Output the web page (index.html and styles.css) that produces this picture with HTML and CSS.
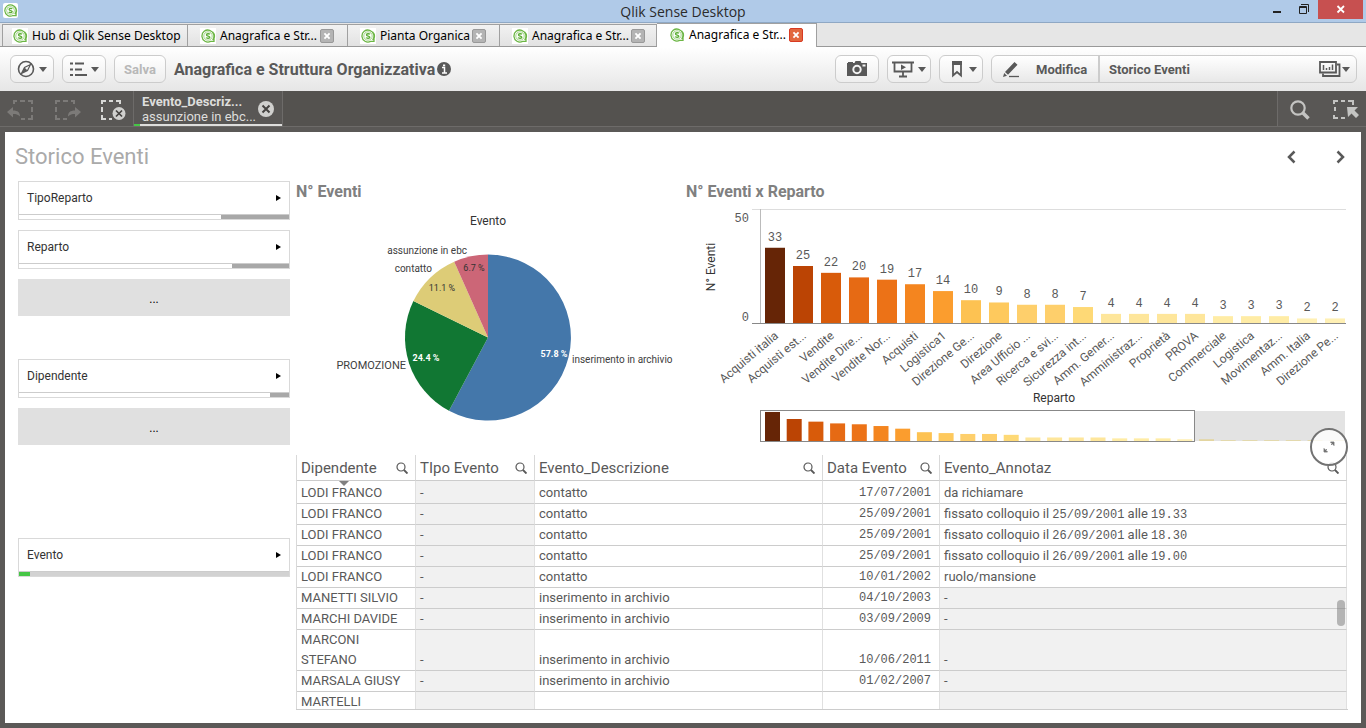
FILE: index.html
```html
<!DOCTYPE html>
<html lang="it">
<head>
<meta charset="utf-8">
<title>Qlik Sense Desktop</title>
<link rel="stylesheet" href="styles.css">
</head>
<body>
<svg class="defs" aria-hidden="true">
  <symbol id="logo" viewBox="0 0 16 16">
    <path d="M12.6 11.8A6 6 0 1 0 10.6 13.4H14V10.4A6 6 0 0 0 12.6 4" fill="none" stroke="#6cb644" stroke-width="1.3"/>
    <circle cx="8" cy="8" r="4.2" fill="none" stroke="#8cc86c" stroke-width=".8"/>
    <path d="M9.8 6.4C9.2 5.5 6.5 5.5 6.5 6.9S9.8 7.9 9.8 9.2 6.8 10.6 6.2 9.5" fill="none" stroke="#5cae34" stroke-width="1.4"/>
  </symbol>
  <symbol id="cross" viewBox="0 0 14 14"><path d="M4 4l6 6M10 4l-6 6" stroke="#fff" stroke-width="2.2"/></symbol>
  <symbol id="caret" viewBox="0 0 8 5"><path d="M0 0h8L4 5z" fill="currentColor"/></symbol>
  <symbol id="lens" viewBox="0 0 12 12"><circle cx="5" cy="5" r="4" fill="none" stroke="#595959" stroke-width="1.2"/><path d="M8 8l3.5 3.5" stroke="#595959" stroke-width="1.9"/></symbol>
</svg>

<header class="titlebar">
  <svg class="app-logo"><use href="#logo"/></svg>
  <h1>Qlik Sense Desktop</h1>
  <div class="window-controls">
    <button aria-label="Riduci a icona"><svg width="10" height="18"><path d="M1 11h8v2H1z" fill="#222"/></svg></button>
    <button aria-label="Ripristina"><svg width="12" height="18"><path d="M1.5 6.5h7v7h-7zM1.5 7.5h7M3 4.500h7.500V12" fill="none" stroke="#222"/></svg></button>
    <button class="window-close" aria-label="Chiudi"><svg width="10" height="18"><path d="M1.5 6l6.500 6.500M8 6l-6.500 6.500" stroke="#fff" stroke-width="1.800"/></svg></button>
  </div>
</header>

<nav class="tabs">
  <div class="tab tab-hub"><svg class="tab-logo"><use href="#logo"/></svg><button class="tab-label">Hub di Qlik Sense Desktop</button></div>
  <div class="tab tab-a"><svg class="tab-logo"><use href="#logo"/></svg><button class="tab-label">Anagrafica e Str...</button><button class="tab-close" aria-label="Chiudi scheda"><svg><use href="#cross"/></svg></button></div>
  <div class="tab tab-b"><svg class="tab-logo"><use href="#logo"/></svg><button class="tab-label">Pianta Organica</button><button class="tab-close" aria-label="Chiudi scheda"><svg><use href="#cross"/></svg></button></div>
  <div class="tab tab-c"><svg class="tab-logo"><use href="#logo"/></svg><button class="tab-label">Anagrafica e Str...</button><button class="tab-close" aria-label="Chiudi scheda"><svg><use href="#cross"/></svg></button></div>
  <div class="tab active"><svg class="tab-logo"><use href="#logo"/></svg><button class="tab-label">Anagrafica e Str...</button><button class="tab-close" aria-label="Chiudi scheda"><svg><use href="#cross"/></svg></button></div>
</nav>

<div class="toolbar">
  <button class="tool" aria-label="Navigazione">
    <svg width="18" height="18"><circle cx="9" cy="9" r="7.5" fill="none" stroke="#595959" stroke-width="1.600"/><path d="M13.500 4.500L10.500 10.500 4.500 13.500 7.500 7.500z" fill="none" stroke="#595959" stroke-width="1.200"/><path d="M7.500 7.500l3 3-6 3z" fill="#595959"/></svg>
    <svg class="caret"><use href="#caret"/></svg>
  </button>
  <button class="tool" aria-label="Menu">
    <svg width="18" height="18"><path d="M1 3.500h3M1 9.500h3M1 15h3M6 3.500h9M6 9.500h7M6 15h12" stroke="#595959" stroke-width="2"/></svg>
    <svg class="caret"><use href="#caret"/></svg>
  </button>
  <button class="tool save" disabled>Salva</button>
  <h2>Anagrafica e Struttura Organizzativa</h2>
  <button class="info" aria-label="Informazioni"><svg width="14" height="14"><circle cx="7" cy="7" r="7" fill="#595959"/><path d="M5 5.500h2.500V11M5 11h5" fill="none" stroke="#fff" stroke-width="1.500"/><path d="M6 2.500h2.200v1.800H6z" fill="#fff"/></svg></button>
  <div class="tools-right">
    <button class="tool" aria-label="Istantanea"><svg width="22" height="18"><path d="M1 3h1V2h5v1h1.500l1-2h5l1 2H21v13H1z" fill="#595959"/><circle cx="11" cy="9.500" r="3.700" fill="none" stroke="#f4f4f4" stroke-width="2"/><path d="M16.500 4.500h3v2h-3z" fill="#f4f4f4"/></svg></button>
    <button class="tool" aria-label="Presentazione">
      <svg width="22" height="18"><path d="M0 2.500h22M2.500 2v9.500h17V2M11 12v4M7 16.500h8" fill="none" stroke="#595959" stroke-width="1.800"/><path d="M9 4.500l5 2.700-5 2.700z" fill="#595959"/></svg>
      <svg class="caret"><use href="#caret"/></svg>
    </button>
    <button class="tool bookmark" aria-label="Segnalibri">
      <svg width="12" height="18"><path d="M2 2v13.500l4-3.500 4 3.500V2z" fill="none" stroke="#595959" stroke-width="1.800"/><path d="M1 1h10v4H1z" fill="#595959"/></svg>
      <svg class="caret"><use href="#caret"/></svg>
    </button>
    <div class="tool-group">
      <button class="edit"><svg width="18" height="18"><path d="M1 17l1.200-4L5 15.700zM3 12L12.500 2l3 2.800L6 14.800z" fill="#595959"/><path d="M7 16.500h10" stroke="#595959" stroke-width="1.300"/></svg>Modifica</button>
      <button class="sheet-picker"><span>Storico Eventi</span>
        <svg width="22" height="18"><path d="M1 2h16v10.500H1z" fill="none" stroke="#595959" stroke-width="1.800"/><path d="M4.500 10V5M7.500 10V8M10.500 10V7M13.500 10V4.500" stroke="#595959" stroke-width="1.500"/><path d="M18 4.500h2.500V16H4v-2.500" fill="none" stroke="#595959" stroke-width="1.800"/></svg>
        <svg class="caret"><use href="#caret"/></svg>
      </button>
    </div>
  </div>
</div>

<div class="selections">
  <div class="selection-tools">
    <button aria-label="Passo indietro"><svg width="28" height="24"><path d="M7 6V3h3M13 3h5M21 3h4v3M25 9v5M25 17v4h-4M18 21h-4" fill="none" stroke="#7c7a78" stroke-width="2"/><path d="M0 14l6-5v3.500c5 0 7 2 7 6-2-2-4-2.500-7-2.500v3.500z" fill="#7c7a78"/></svg></button>
    <button aria-label="Passo avanti"><svg width="28" height="24"><path d="M3 6V3h4M10 3h5M18 3h3v3M3 9v5M3 17v4h4M10 21h4" fill="none" stroke="#7c7a78" stroke-width="2"/><path d="M28 14l-6-5v3.500c-5 0-7 2-7 6 2-2 4-2.500 7-2.500v3.500z" fill="#7c7a78"/></svg></button>
    <button aria-label="Cancella selezioni"><svg width="28" height="24"><path d="M3 6V3h4M10 3h4M17 3h4v3M3 9v5M3 17v4h4M10 21h3" fill="none" stroke="#d8d8d6" stroke-width="2"/><circle cx="20" cy="15.500" r="6.500" fill="#d0d0ce"/><path d="M17 12.500l6 6M23 12.500l-6 6" stroke="#454341" stroke-width="1.700"/></svg></button>
  </div>
  <div class="chip">
    <button class="chip-text"><b>Evento_Descriz...</b><span>assunzione in ebc...</span></button>
    <button class="chip-clear" aria-label="Rimuovi selezione"><svg width="18" height="18"><circle cx="9" cy="9" r="8" fill="#d0d0ce"/><path d="M5.500 5.500l7 7M12.500 5.500l-7 7" stroke="#454341" stroke-width="2"/></svg></button>
    <div class="chip-bar"></div>
  </div>
  <div class="selection-search">
    <button aria-label="Cerca"><svg width="22" height="22"><circle cx="9" cy="9" r="6.700" fill="none" stroke="#c4c4c2" stroke-width="2.200"/><path d="M13.500 13.500l6 6" stroke="#c4c4c2" stroke-width="3.600"/></svg></button>
    <button aria-label="Strumento selezioni"><svg width="26" height="22"><path d="M1 5V2h4M8 2h4M15 2h5v4M2 8v4M1 16v3h4M8 19h4" fill="none" stroke="#c4c4c2" stroke-width="2"/><path d="M14 8h11l-3.500 3.500L26 16l-3 3-4.500-4.500L15 18z" fill="#c4c4c2"/></svg></button>
  </div>
</div>

<main class="sheet">
  <div class="sheet-head">
    <h2>Storico Eventi</h2>
    <button aria-label="Foglio precedente"><svg width="12" height="14"><path d="M9.500 1.500L4 7l5.500 5.500" fill="none" stroke="#595959" stroke-width="2.500"/></svg></button>
    <button aria-label="Foglio successivo"><svg width="12" height="14"><path d="M2.500 1.500L8 7l-5.500 5.500" fill="none" stroke="#595959" stroke-width="2.500"/></svg></button>
  </div>
  <div class="content">
    <aside class="filters">
      <button class="filter">TipoReparto<i></i><span class="state s-tipo"></span></button>
      <button class="filter">Reparto<i></i><span class="state s-reparto"></span></button>
      <button class="more">...</button>
      <button class="filter far">Dipendente<i></i><span class="state s-dipendente"></span></button>
      <button class="more">...</button>
      <button class="filter farther">Evento<i></i><span class="state s-evento"></span></button>
    </aside>
    <div class="objects">
      <div class="charts">
        <section>
          <h3>N° Eventi</h3>
          <svg class="chart" viewBox="0 0 384 245" role="img" aria-label="N° Eventi">
            <path d="M192 132.500V49.500A83 83 0 1 1 153 205.800z" fill="#4477aa"/>
            <path d="M192 132.500L153 205.800A83 83 0 0 1 117.400 96.100z" fill="#117733"/>
            <path d="M192 132.500L117.400 96.100A83 83 0 0 1 158.200 56.700z" fill="#ddcc77"/>
            <path d="M192 132.500L158.200 56.700A83 83 0 0 1 192 49.500z" fill="#cc6677"/>
            <text class="axis-title" x="192" y="20" text-anchor="middle">Evento</text>
            <g class="slice-name">
              <text x="171" y="49" text-anchor="end">assunzione in ebc</text>
              <text x="136" y="67" text-anchor="end">contatto</text>
              <text class="caps" x="110" y="164" text-anchor="end">PROMOZIONE</text>
              <text x="276" y="158">inserimento in archivio</text>
            </g>
            <g class="slice-value" text-anchor="middle">
              <text x="178" y="66">6.7 %</text>
              <text x="146" y="86">11.1 %</text>
              <text class="light" x="130" y="156">24.4 %</text>
              <text class="light" x="258" y="152">57.8 %</text>
            </g>
          </svg>
        </section>
        <section class="bars">
          <h3>N° Eventi x Reparto</h3>
          <svg class="chart" id="bar-chart" viewBox="0 0 662 245" role="img" aria-label="N° Eventi x Reparto"></svg>
          <button class="expand" aria-label="Schermo intero"><svg width="12" height="12"><path d="M7.500 1H11v3.500zM1 7.500V11h3.500zM10 2L8 4M2 10l2-2" fill="#737373" stroke="#737373" stroke-width=".8"/></svg></button>
        </section>
      </div>
      <div class="table-wrap">
        <table>
          <colgroup><col class="c-dip"><col class="c-tipo"><col class="c-desc"><col class="c-data"><col></colgroup>
          <thead><tr>
            <th class="sorted"><div>Dipendente<button aria-label="Cerca in Dipendente"><svg><use href="#lens"/></svg></button></div></th>
            <th><div>TIpo Evento<button aria-label="Cerca in TIpo Evento"><svg><use href="#lens"/></svg></button></div></th>
            <th><div>Evento_Descrizione<button aria-label="Cerca in Evento_Descrizione"><svg><use href="#lens"/></svg></button></div></th>
            <th><div>Data Evento<button aria-label="Cerca in Data Evento"><svg><use href="#lens"/></svg></button></div></th>
            <th><div>Evento_Annotaz<button aria-label="Cerca in Evento_Annotaz"><svg><use href="#lens"/></svg></button></div></th>
          </tr></thead>
          <tbody>
            <tr><td>LODI FRANCO</td><td class="null">-</td><td>contatto</td><td class="date">17/07/2001</td><td>da richiamare</td></tr>
            <tr><td>LODI FRANCO</td><td class="null">-</td><td>contatto</td><td class="date">25/09/2001</td><td>fissato colloquio il <span class="num">25/09/2001</span> alle <span class="num">19.33</span></td></tr>
            <tr><td>LODI FRANCO</td><td class="null">-</td><td>contatto</td><td class="date">25/09/2001</td><td>fissato colloquio il <span class="num">26/09/2001</span> alle <span class="num">18.30</span></td></tr>
            <tr><td>LODI FRANCO</td><td class="null">-</td><td>contatto</td><td class="date">25/09/2001</td><td>fissato colloquio il <span class="num">26/09/2001</span> alle <span class="num">19.00</span></td></tr>
            <tr><td>LODI FRANCO</td><td class="null">-</td><td>contatto</td><td class="date">10/01/2002</td><td>ruolo/mansione</td></tr>
            <tr><td>MANETTI SILVIO</td><td class="null">-</td><td>inserimento in archivio</td><td class="date">04/10/2003</td><td class="null">-</td></tr>
            <tr><td>MARCHI DAVIDE</td><td class="null">-</td><td>inserimento in archivio</td><td class="date">03/09/2009</td><td class="null">-</td></tr>
            <tr><td>MARCONI<br>STEFANO</td><td class="null">-</td><td>inserimento in archivio</td><td class="date">10/06/2011</td><td class="null">-</td></tr>
            <tr><td>MARSALA GIUSY</td><td class="null">-</td><td>inserimento in archivio</td><td class="date">01/02/2007</td><td class="null">-</td></tr>
            <tr><td>MARTELLI</td><td class="null"></td><td></td><td class="date"></td><td class="null"></td></tr>
          </tbody>
        </table>
        <div class="scroll-thumb"></div>
      </div>
    </div>
  </div>
</main>
<script src="chart.js"></script>
</body>
</html>
```

FILE: styles.css
```css
* { box-sizing: border-box; }
body {
  margin: 0;
  height: 100vh;
  display: flex;
  flex-direction: column;
  background: #5b5957;
  color: #595959;
  font-family: Roboto, "Liberation Sans", sans-serif;
  font-size: 13px;
}
button {
  margin: 0;
  padding: 0;
  border: 0;
  background: none;
  font: inherit;
  color: inherit;
  text-align: left;
}
h1, h2, h3 { margin: 0; }
svg { display: block; flex: none; }
.defs { position: absolute; width: 0; height: 0; }

/* Window frame */
.titlebar {
  flex: none;
  display: grid;
  grid-template-columns: 1fr auto 1fr;
  height: 23px;
  padding: 0 3px;
  background: #b0cae8;
  border-bottom: 1px solid #8fa8c4;
}
.titlebar h1 {
  font: 14px/23px "Open Sans", sans-serif;
  color: #2b2b2b;
}
.app-logo { width: 15px; height: 15px; margin-top: 3px; background: #fff; border-radius: 2px; }
.window-controls { display: flex; justify-content: flex-end; align-items: flex-start; }
.window-controls button { margin-right: 16px; }
.window-controls button + button { margin-right: 8px; }
.window-controls .window-close { display: flex; justify-content: center; width: 45px; height: 19px; margin-right: 0; background: #c75050; }

.tabs {
  flex: none;
  display: flex;
  align-items: flex-end;
  height: 24px;
  padding-left: 2px;
  background: #e6e6e6;
  border-bottom: 1px solid #999;
}
.tab {
  display: flex;
  align-items: center;
  height: 22px;
  padding: 0 13px 0 12px;
  border: 1px solid #a0a0a0;
  border-left-width: 0;
  border-bottom: 0;
  background: linear-gradient(#f2f2f2, #e2e2e2);
  font: 12px/20px "Noto Sans", sans-serif;
  color: #000;
}
.tab:first-child { border-left-width: 1px; }
.tab-hub { width: 186px; padding: 0 0 0 9px; }
.tab-a { width: 160px; }
.tab-b { width: 152px; }
.tab-c { width: 157px; padding-right: 11px; }
.tab.active { width: 160px; height: 24px; margin-bottom: -1px; padding-bottom: 2px; background: #fff; }
.tab-logo { width: 16px; height: 16px; margin-right: 4px; background: #fff; }
.tab-label { flex: 1; white-space: nowrap; }
.tab-close { border: 1px solid #999; border-radius: 2px; background: #b4b4b4; }
.tab-close svg { width: 12px; height: 12px; }
.active .tab-close { background: #e2673f; border-color: #d83a22; }

/* Toolbar */
.toolbar {
  flex: none;
  display: flex;
  align-items: center;
  height: 44px;
  padding: 0 9px 0 10px;
  background: linear-gradient(#fff, #e6e6e6);
}
.toolbar h2 { font-size: 16px; font-weight: 700; white-space: nowrap; }
.tool {
  display: flex;
  align-items: center;
  justify-content: center;
  gap: 4px;
  width: 44px;
  height: 28px;
  margin-right: 8px;
  padding: 0 2px;
  border: 1px solid #ccc;
  border-radius: 6px;
  background: linear-gradient(#fff, #eee);
}
.save { width: 52px; color: #b8b8b8; font-weight: 700; }
.bookmark { padding-left: 8px; gap: 6px; }
.caret { width: 8px; height: 5px; }
.info { margin-left: 2px; }
.tools-right { display: flex; margin-left: auto; }
.tool-group {
  display: flex;
  height: 28px;
  border: 1px solid #ccc;
  border-radius: 6px;
  background: linear-gradient(#fff, #e8e8e8);
  font-weight: 700;
}
.edit { display: flex; align-items: center; gap: 16px; width: 108px; padding-left: 10px; border-right: 2px solid #ccc; }
.sheet-picker { display: flex; align-items: center; width: 256px; padding: 0 6px 0 9px; gap: 1px; }
.sheet-picker span { flex: 1; }

/* Selections */
.selections {
  flex: none;
  display: flex;
  height: 36px;
  background: #54524f;
  border-bottom: 1px solid #6d6b69;
}
.selection-tools {
  display: flex;
  align-items: center;
  gap: 18px;
  width: 134px;
  padding: 2px 0 0 7px;
  background: #595755;
  border-right: 1px solid #6d6b69;
}
.chip {
  display: grid;
  grid-template-columns: 1fr auto;
  align-items: center;
  width: 149px;
  background: #595755;
  border-right: 1px solid #6d6b69;
  color: #dededc;
}
.chip-text { display: flex; flex-direction: column; padding: 3px 0 0 8px; line-height: 15px; white-space: nowrap; }
.chip-clear { margin: 2px 7px 0 0; }
.chip-bar { grid-column: 1 / 3; align-self: end; height: 2px; background: linear-gradient(90deg, #46c646 6px, #dededc 6px); }
.selection-search {
  display: flex;
  align-items: center;
  gap: 22px;
  margin-left: auto;
  padding: 2px 7px 0 11px;
  background: #595755;
  border-left: 1px solid #6d6b69;
}

/* Sheet */
.sheet {
  flex: 1;
  display: flex;
  flex-direction: column;
  min-height: 0;
  margin: 5px;
  padding: 0 13px 13px;
  background: #fff;
}
.sheet-head { flex: none; display: flex; align-items: center; height: 49px; }
.sheet-head h2 { flex: 1; margin-left: -3px; font-size: 22px; font-weight: 400; color: #aaa; }
.sheet-head button { padding: 0 1px; }
.sheet-head button + button { margin-left: 36px; }
.content { flex: 1; display: grid; grid-template-columns: 272px 1fr; gap: 6px; min-height: 0; }
.filters { display: flex; flex-direction: column; gap: 10px; font-size: 12px; color: #333; }
.filter {
  display: grid;
  grid-template-columns: 1fr auto;
  grid-template-rows: 1fr 5px;
  align-items: center;
  height: 39px;
  padding-left: 8px;
  border: 1px solid #d9d9d9;
}
.filter i { width: 0; margin-right: 8px; border: 3px solid transparent; border-left: 5px solid #000; border-right: 0; }
.state { grid-column: 1 / 3; align-self: end; height: 5px; margin-left: -8px; border-top: 1px solid #ccc; }
.s-tipo { background: linear-gradient(90deg, #fff 75%, #a8a8a8 75%); }
.s-reparto { background: linear-gradient(90deg, #fff 79%, #a8a8a8 79%); }
.s-dipendente { background: linear-gradient(90deg, #fff 93%, #a8a8a8 93%); }
.s-evento { background: linear-gradient(90deg, #46c646 4%, #d2d2d2 4%); }
.more { height: 37px; padding-top: 2px; background: #e0e0e0; text-align: center; color: #000; }
.far { margin-top: 33px; }
.farther { margin-top: 83px; }

.objects { display: flex; flex-direction: column; min-width: 0; min-height: 0; }
.charts { flex: none; display: grid; grid-template-columns: 384fr 662fr; gap: 6px; }
.charts h3 { height: 24px; font-size: 16px; line-height: 22px; color: #808080; }
.bars { position: relative; }
.chart { width: 100%; height: auto; }
.axis-title { font-size: 12px; fill: #333; }
.slice-name { font-size: 10px; fill: #404040; }
.caps { font-size: 11px; }
.slice-value { font-size: 9px; fill: #333; }
.light { fill: #fff; font-weight: 700; }
.bar-value { font: 12px "Liberation Mono", monospace; fill: #595959; }
.bar-name { font-size: 12px; fill: #595959; }
.expand {
  position: absolute;
  right: 0;
  bottom: -16px;
  z-index: 2;
  display: flex;
  align-items: center;
  justify-content: center;
  width: 38px;
  height: 38px;
  border: 2px solid #737373;
  border-radius: 50%;
  background: rgba(255, 255, 255, .8);
}

/* Table */
.table-wrap {
  position: relative;
  flex: 1;
  min-height: 0;
  margin-top: 5px;
  overflow: hidden;
  border-bottom: 1px solid #ccc;
}
table { width: calc(100% - 1px); table-layout: fixed; border-collapse: separate; border-spacing: 0; border-left: 1px solid #d9d9d9; }
.c-dip, .c-tipo { width: 119px; }
.c-desc { width: 288px; }
.c-data { width: 117px; }
th {
  position: relative;
  height: 26px;
  padding: 0 7px 0 4px;
  border-right: 1px solid #d9d9d9;
  border-bottom: 1px solid #ccc;
  font-size: 15px;
  font-weight: 400;
  line-height: 18px;
  text-align: left;
}
th div { display: flex; align-items: center; justify-content: space-between; }
th svg { width: 12px; height: 12px; }
.sorted::after { content: ""; position: absolute; left: 42px; top: 26px; border: 5px solid transparent; border-top-color: #808080; border-bottom: 0; }
td {
  padding: 0 4px;
  border-right: 1px solid #e0e0e0;
  border-bottom: 1px solid #ccc;
  line-height: 20px;
  vertical-align: bottom;
}
tbody tr:first-child td { padding-top: 2px; }
td.null { background: #f1f1f1; }
.date { padding-right: 8px; text-align: right; font-family: "Liberation Mono", monospace; font-size: 12px; }
.num { font-family: "Liberation Mono", monospace; font-size: 12px; line-height: 12px; }
.scroll-thumb { position: absolute; right: 3px; top: 57%; width: 8px; height: 26px; border-radius: 4px; background: rgba(120, 120, 120, .5); }
```

FILE: chart.js
```js
const data = [
  ["Acquisti italia", 33], ["Acquisti est...", 25], ["Vendite", 22], ["Vendite Dire...", 20],
  ["Vendite Nor...", 19], ["Acquisti", 17], ["Logistica1", 14], ["Direzione Ge...", 10],
  ["Direzione", 9], ["Area Ufficio ...", 8], ["Ricerca e svi...", 8], ["Sicurezza int...", 7],
  ["Amm. Gener...", 4], ["Amministraz...", 4], ["Proprietà", 4], ["PROVA", 4],
  ["Commerciale", 3], ["Logistica", 3], ["Movimentaz...", 3], ["Amm. Italia", 2], ["Direzione Pe...", 2]
];
const overflow = [1, 1, 1, 1, 1, 1];
const colors = {
  33: "#662506", 25: "#bb4404", 22: "#d85b0a", 20: "#e66a14", 19: "#ec7217", 17: "#f4851f",
  14: "#fb9d2e", 10: "#fdc252", 9: "#fec95d", 8: "#fecf6b", 7: "#fed976", 4: "#fee69b",
  3: "#ffeca5", 2: "#fff0b4", 1: "#fff3bb"
};
const svg = document.getElementById("bar-chart");

function add(tag, attrs, text) {
  const node = document.createElementNS("http://www.w3.org/2000/svg", tag);
  for (const key in attrs) node.setAttribute(key, attrs[key]);
  if (text !== undefined) node.textContent = text;
  svg.appendChild(node);
}

const base = 118;
add("path", { d: "M66 4.5H660", stroke: "#ddd" });
add("path", { d: "M74.5 4V118", stroke: "#bbb" });
add("text", { class: "bar-value", x: 63, y: 17, "text-anchor": "end" }, "50");
add("text", { class: "bar-value", x: 63, y: 116, "text-anchor": "end" }, "0");
add("text", { class: "axis-title", transform: "translate(29 62) rotate(-90)", "text-anchor": "middle" }, "N° Eventi");
data.forEach(([name, value], i) => {
  const x = 79 + i * 28;
  const h = value * 114 / 50;
  add("rect", { x, y: base - h, width: 20, height: h, fill: colors[value] });
  add("text", { class: "bar-value", x: x + 10, y: base - h - 7, "text-anchor": "middle" }, value);
  add("text", { class: "bar-name", transform: `translate(${x + 14} 132) rotate(-40)`, "text-anchor": "end" }, name);
});
add("path", { d: "M66 118.5H660", stroke: "#888" });
add("text", { class: "axis-title", x: 368, y: 197, "text-anchor": "middle" }, "Reparto");

data.map(d => d[1]).concat(overflow).forEach((value, i) => {
  const h = value * 0.88;
  add("rect", { x: 79 + i * 21.7, y: 236 - h, width: 15, height: h, fill: colors[value] });
});
add("rect", { x: 509, y: 206, width: 150, height: 30, fill: "#000", "fill-opacity": 0.11 });
add("rect", { x: 74.5, y: 205.5, width: 434, height: 31, fill: "none", stroke: "#888" });
```
